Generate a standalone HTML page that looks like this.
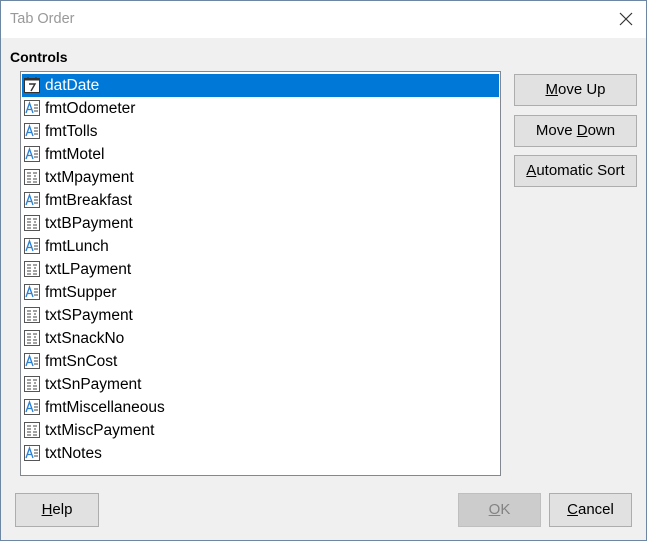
<!DOCTYPE html>
<html><head><style>
*{margin:0;padding:0;box-sizing:border-box}
body{width:647px;height:541px;background:#f0f0f0;font-family:"Liberation Sans",sans-serif;font-size:14px;color:#000;position:relative;overflow:hidden}
.win{position:absolute;left:0;top:0;width:647px;height:541px;border:1px solid #6d87a3;}
.title{position:absolute;left:1px;top:1px;width:645px;height:37px;background:#fff;}
.title span{position:absolute;left:9px;top:10px;color:#999;font-size:14.5px}
.x{position:absolute;left:617px;top:10px}
.lbl{position:absolute;left:10px;top:49px;font-weight:bold;font-size:14px}
.list{position:absolute;left:20px;top:71px;width:481px;height:405px;background:#fff;border:1px solid #828790}
.row{position:absolute;left:1px;width:477px;height:23px;line-height:23px;font-size:15.5px}
.row span{position:absolute;left:23px;top:0}
.row svg{position:absolute;left:2px;top:3px}
.sel{background:#0078d7;color:#fff}
.btn{position:absolute;background:#e1e1e1;border:1px solid #adadad;text-align:center;line-height:30px;font-size:15px}
.dis{background:#cccccc;border-color:#bfbfbf;color:#838383}
u{text-decoration:underline}
</style></head><body>
<div class="win"></div>
<div class="title"><span>Tab Order</span>
<svg class="x" width="16" height="16" viewBox="0 0 16 16"><path d="M2 2L14 14M14 2L2 14" stroke="#333" stroke-width="1.2"/></svg></div>
<div class="lbl">Controls</div>
<div class="list">
<div class="row sel" style="top:2px"><svg width="16" height="16" viewBox="0 0 16 16"><rect x="0.5" y="1.5" width="15" height="14" fill="#fff" stroke="#333"/><rect x="0.5" y="1.5" width="15" height="2" fill="#333"/><path d="M4 0v3M12 0v3" stroke="#333"/><path d="M5 7h6l-4 7" stroke="#333" stroke-width="1.4" fill="none"/></svg><span>datDate</span></div>
</div>
<div class="btn" style="left:514px;top:74px;width:123px;height:32px"><u>M</u>ove Up</div>
<div class="btn" style="left:514px;top:115px;width:123px;height:32px">Move <u>D</u>own</div>
<div class="btn" style="left:514px;top:155px;width:123px;height:32px"><u>A</u>utomatic Sort</div>
<div class="btn" style="left:15px;top:493px;width:84px;height:34px;line-height:32px"><u>H</u>elp</div>
<div class="btn dis" style="left:458px;top:493px;width:83px;height:34px;line-height:32px"><u>O</u>K</div>
<div class="btn" style="left:549px;top:493px;width:83px;height:34px;line-height:32px"><u>C</u>ancel</div>
<script>
var items=[["fmtOdometer",0],["fmtTolls",0],["fmtMotel",0],["txtMpayment",1],["fmtBreakfast",0],["txtBPayment",1],["fmtLunch",0],["txtLPayment",1],["fmtSupper",0],["txtSPayment",1],["txtSnackNo",1],["fmtSnCost",0],["txtSnPayment",1],["fmtMiscellaneous",0],["txtMiscPayment",1],["txtNotes",0]];
var A='<svg width="16" height="16" viewBox="0 0 16 16"><rect x="0.5" y="0.5" width="15" height="15" fill="#fff" stroke="#555"/><path d="M2 13L5.5 3L9 13M3.3 9.5h4.4" stroke="#2a7fd4" stroke-width="1.3" fill="none"/><path d="M10 5h4M10 8h4M10 11h4" stroke="#444"/></svg>';
var T='<svg width="16" height="16" viewBox="0 0 16 16"><rect x="0.5" y="0.5" width="15" height="15" fill="#fff" stroke="#555"/><path d="M3 4h4M3 7h4M3 10h4M3 13h4M9 4h4M9 10h4M9 13h4" stroke="#444"/><path d="M10 7h2" stroke="#444"/></svg>';
var l=document.querySelector('.list'),h='';
items.forEach(function(it,i){h+='<div class="row" style="top:'+(25+i*23)+'px">'+(it[1]?T:A)+'<span>'+it[0]+'</span></div>';});
l.insertAdjacentHTML('beforeend',h);
</script>
</body></html>
